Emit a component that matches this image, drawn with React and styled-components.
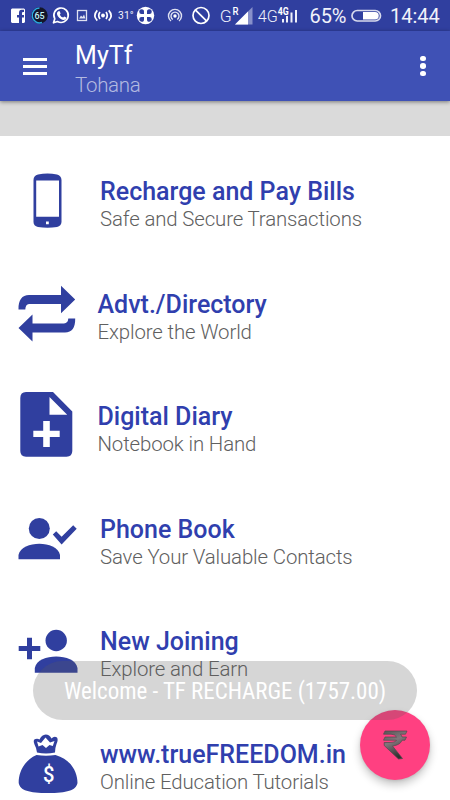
import React from "react";
import styled, { createGlobalStyle } from "styled-components";

const GlobalStyle = createGlobalStyle`
  * { box-sizing: border-box; }
  body { margin: 0; background: #fff; font-family: Roboto, "Liberation Sans", sans-serif; }
`;

const Screen = styled.div`
  position: relative;
  display: flex;
  flex-direction: column;
  width: 450px;
  height: 800px;
  overflow: hidden;
  background: #fff;
`;

const StatusBar = styled.header`
  display: flex;
  flex: none;
  align-items: flex-start;
  height: 31px;
  background: #303f9f;
  color: #f1f2fa;
`;

const StatusIcon = styled.svg`
  display: block;
  flex: none;
  width: ${(p) => p.$w}px;
  height: 31px;
  fill: none;
  stroke: none;
  font-family: Roboto, sans-serif;
`;

const StatusText = styled.span`
  flex: none;
  width: ${(p) => p.$w}px;
  font-size: ${(p) => p.$size || 20}px;
  line-height: ${(p) => p.$line || 32}px;
  letter-spacing: ${(p) => p.$track || 0}px;
  white-space: nowrap;
`;

const Toolbar = styled.div`
  position: relative;
  z-index: 1;
  display: flex;
  flex: none;
  align-items: center;
  height: 70px;
  padding: 0 23px;
  background: #3f51b5;
  box-shadow: 0 1px 4px rgba(0, 0, 0, 0.45);
`;

const MenuButton = styled.button`
  display: flex;
  flex-direction: column;
  gap: 4px;
  width: 24px;
  padding: 0;
  border: 0;
  background: none;
`;

const MenuLine = styled.span`
  height: 3px;
  background: #fff;
`;

const Heading = styled.div`
  flex: 1;
  margin-left: 28px;
  padding-top: 8px;
`;

const AppTitle = styled.h1`
  margin: 0;
  color: #fff;
  font-size: 25px;
  font-weight: 400;
  line-height: 30px;
  letter-spacing: 0.1px;
`;

const AppSubtitle = styled.div`
  color: #b3bae1;
  font-size: 20.5px;
  font-weight: 300;
  line-height: 29px;
  letter-spacing: -0.3px;
`;

const MoreButton = styled.button`
  display: flex;
  flex-direction: column;
  gap: 1.9px;
  margin-right: 1.5px;
  padding: 0;
  border: 0;
  background: none;
`;

const Dot = styled.span`
  width: 5.6px;
  height: 5.6px;
  border-radius: 50%;
  background: #fff;
`;

const Banner = styled.div`
  flex: none;
  height: 35px;
  background: #dadada;
`;

const List = styled.main`
  display: flex;
  flex-direction: column;
  flex: none;
  padding-top: 12px;
`;

const Row = styled.article`
  display: flex;
  align-items: center;
  height: 112.56px;
  padding-left: 16px;
`;

const RowIcon = styled.svg`
  flex: none;
  width: 64px;
  height: 80px;
  fill: #303f9f;
`;

const RowText = styled.div`
  margin-left: ${(p) => p.$gap}px;
  padding-bottom: 1.4px;
  white-space: nowrap;
`;

const RowTitle = styled.h2`
  margin: 0;
  color: #303fae;
  font-size: 25px;
  font-weight: 500;
  line-height: 31px;
`;

const RowSub = styled.div`
  color: #606060;
  font-size: 20.4px;
  font-weight: 300;
  line-height: 24px;
  letter-spacing: -0.13px;
`;

const Fab = styled.button`
  position: absolute;
  left: 360px;
  top: 710px;
  width: 70px;
  height: 70px;
  padding: 0;
  border: 0;
  border-radius: 50%;
  background: #ff4081;
  box-shadow: 0 5px 9px rgba(0, 0, 0, 0.22), 0 1px 3px rgba(0, 0, 0, 0.1);

  svg { display: block; }
`;

const Toast = styled.div`
  position: absolute;
  left: 33px;
  top: 661px;
  display: flex;
  align-items: center;
  justify-content: center;
  width: 384px;
  height: 59px;
  border-radius: 29.5px;
  background: rgba(90, 90, 90, 0.25);
`;

const ToastText = styled.span`
  padding-top: 2px;
  color: #fff;
  font-family: "Roboto Condensed", Roboto, sans-serif;
  font-stretch: 75%;
  font-size: 23px;
  line-height: 30px;
  letter-spacing: -0.04px;
  white-space: nowrap;
`;

const rows = [
  {
    title: "Recharge and Pay Bills", sub: "Safe and Secure Transactions", gap: 20, y: 164,
    icon: (
      <path fillRule="evenodd" d="M38 174.5Q47.5 172.5 57 174.5Q61.3 175.5 61.5 180V222Q61.3 226 57 227Q47.5 228.500 38 227Q33.500 226 33.500 222V180Q33.500 175.500 38 174.500ZM36.200 180.500V216.700H59V180.500ZM46 221.500V224.300H48.800V221.500Z" />
    ),
  },
  {
    title: "Advt./Directory", sub: "Explore the World", gap: 17.5, y: 276.9,
    icon: (
      <>
        <path d="M18.500 309.300C18.300 300 22 295 29 295H61V285.700L75.200 299.500L61 313.200V304H29Q25.500 304.500 25.300 309.300Z" />
        <path d="M75.200 318.500C75.400 327.500 72 332.500 65 332.500H32.500V341.500L18.500 328L32.500 314.300V323.500H64Q68 323 68.300 318.500Z" />
      </>
    ),
  },
  {
    title: "Digital Diary", sub: "Notebook in Hand", gap: 17.5, y: 389,
    icon: (
      <path fillRule="evenodd" d="M26 392H53L72.300 411.500V451Q72.300 456.700 66.500 456.700H26Q20.300 456.700 20.300 451V398Q20.300 392 26 392ZM49.500 397V414.700H67.200ZM43.200 421V430.700H33.300V437H43.200V447H49.800V437H59.700V430.700H49.800V421Z" />
    ),
  },
  {
    title: "Phone Book", sub: "Save Your Valuable Contacts", gap: 20, y: 502,
    icon: (
      <>
        <circle cx="39.300" cy="528.500" r="10.500" />
        <path d="M18.500 559.300V555C20 547 30 543.700 39.300 543.700S58.500 547 60 555V559.300Z" />
        <path d="M52.800 534.500L56.200 531.300L61.600 536.800L73.200 525.300L76.700 528.700L61.600 544.500Z" />
      </>
    ),
  },
  {
    title: "New Joining", sub: "Explore and Earn", gap: 20, y: 614,
    icon: (
      <>
        <path d="M27 637.700H32V646H40.300V651H32V659.300H27V651H18.700V646H27Z" />
        <circle cx="56.200" cy="640.500" r="10.700" />
        <path d="M34.800 672.700V668C36.300 660 46.500 656.500 56.200 656.500S76 660 77.500 668V672.700Z" />
      </>
    ),
  },
  {
    title: "www.trueFREEDOM.in", sub: "Online Education Tutorials", gap: 20, y: 727.1,
    icon: (
      <>
        <path d="M36.500 755C23 761 18.500 774 18.700 783C20 790.500 29 793 48 793S76 790.500 77.500 783C77.500 773 72 760 55.500 755Q46 756.500 36.500 755Z" />
        <path d="M37 752.500Q36.500 748 34.500 744.500Q32.500 739.500 35.500 739Q38 738.500 39.500 739.500Q42 735 45.700 734.700Q49.500 735 51.500 738.500Q54 736 57 737.500Q58.500 739.500 56.500 744Q55 748 55 752.500Q46 754.500 37 752.500Z" />
        <path fill="#fff" d="M38.500 746.500L37 741.500L41 743L45.500 737.500L50 742.500L54.500 741L52.800 746L49.500 745L46 748L42.500 745Z" />
        <text x="43" y="782" fill="#fff" fontFamily="Roboto" fontSize="21.500" fontWeight="500" textLength="11.500" lengthAdjust="spacingAndGlyphs">$</text>
      </>
    ),
  },
];

function StatusIcons() {
  return (
    <>
      <StatusIcon $w={28} viewBox="0 0 28 31">
        <path fill="#fff" fillRule="evenodd" d="M12 8.500H24L25 9.500V22L24 23H22V17.500H24V15H22V13Q22 12 23 12H24V9.800H21.500Q19 10 19 12.800V15H17V17.500H19V23H12L11 22V9.500Z" />
      </StatusIcon>
      <StatusIcon $w={23} viewBox="28 0 23 31">
        <circle cx="39.500" cy="15.500" r="7.500" fill="#15152a" stroke="#141829" strokeWidth="1.500" />
        <path d="M42 22.500A7.400 7.400 0 1 1 39.500 8.100" stroke="#2ca6df" strokeWidth="1.500" />
        <text x="39.500" y="19" fill="#c3f6fa" fontSize="9" fontWeight="500" textAnchor="middle">65</text>
      </StatusIcon>
      <StatusIcon $w={21} viewBox="51 0 21 31">
        <path d="M53.500 22.800L54.800 18.800A7.200 7.200 0 1 1 57.500 21.500Z" stroke="#fff" strokeWidth="1.700" strokeLinejoin="round" />
        <path fill="#fff" d="M58 11.500Q59.500 10.500 60 12L60.600 13.500L59.800 14.700Q61 17 63.200 17.600L64.300 16.500L66.200 17.500Q66.200 20 63.500 20C60 19.500 56.500 15.500 57 13Q57.200 12 58 11.500Z" />
      </StatusIcon>
      <StatusIcon $w={18} viewBox="72 0 18 31">
        <rect x="77.500" y="10.500" width="9" height="10" stroke="#dfe1f1" strokeWidth="1.300" />
        <path fill="#dfe1f1" d="M79 18.500L81 15.500L82.500 17L84 14.500L85.500 18.500Z" />
      </StatusIcon>
      <StatusIcon $w={28} viewBox="90 0 28 31">
        <circle cx="103" cy="15.500" r="1.900" fill="#fff" />
        <path d="M100 12Q97.500 15.500 100 19M106 12Q108.500 15.500 106 19M97.300 10.300Q92.500 15.500 97.300 20.700M108.700 10.300Q113.500 15.500 108.700 20.700" stroke="#fff" strokeWidth="1.700" />
      </StatusIcon>
      <StatusText $w={17} $size={10.300} $line={32} $track={0.1}>31°</StatusText>
      <StatusIcon $w={25} viewBox="135 0 25 31">
        <circle cx="145.500" cy="15.500" r="8.700" fill="#fff" />
        <path d="M144 11.800A2.400 2.400 0 1 0 141.800 14H144ZM147 11.800A2.400 2.400 0 1 1 149.200 14H147ZM144 19.200A2.400 2.400 0 1 1 141.800 17H144ZM147 19.200A2.400 2.400 0 1 0 149.200 17H147Z" fill="#303f9f" />
      </StatusIcon>
      <StatusIcon $w={28} viewBox="160 0 28 31">
        <circle cx="175" cy="16" r="1.700" fill="#fff" />
        <path d="M172.800 19.500A4 4 0 1 1 177.200 19.500M171 21A6.500 6.500 0 1 1 179 21" stroke="#dfe1f1" strokeWidth="1.400" />
      </StatusIcon>
      <StatusIcon $w={32} viewBox="188 0 32 31">
        <circle cx="201" cy="15.500" r="8" stroke="#fff" strokeWidth="1.700" />
        <path d="M195.300 9.800L206.700 21.200" stroke="#fff" strokeWidth="1.700" />
      </StatusIcon>
      <StatusIcon $w={38} viewBox="220 0 38 31">
        <text x="219.800" y="22.300" fill="#eef0fa" fontSize="16" fontWeight="300" textLength="12" lengthAdjust="spacingAndGlyphs">G</text>
        <path d="M235 24.500L252.500 7V24.500Z" fill="#8790ca" />
        <path d="M235 24.500L248 11.500V24.500Z" fill="#fff" />
        <text x="232.500" y="15" fill="#fff" stroke="#303f9f" strokeWidth="1" paintOrder="stroke" fontSize="10.500" fontWeight="500" textLength="6" lengthAdjust="spacingAndGlyphs">R</text>
      </StatusIcon>
      <StatusIcon $w={51.5} viewBox="258 0 51.500 31">
        <text x="257.800" y="22.300" fill="#eef0fa" fontSize="16" fontWeight="300" textLength="20" lengthAdjust="spacingAndGlyphs">4G</text>
        <path d="M283 19V22.500M287 16V22.500M291.500 12.500V22.500M296 10V22.500" stroke="#eef0fa" strokeWidth="2" />
        <text x="277.800" y="15" fill="#fff" stroke="#303f9f" strokeWidth="1" paintOrder="stroke" fontSize="10" fontWeight="700" textLength="11" lengthAdjust="spacingAndGlyphs">4G</text>
      </StatusIcon>
      <StatusText $w={41.5} $size={20} $line={33} $track={-0.1}>65%</StatusText>
      <StatusIcon $w={39} viewBox="351 0 39 31">
        <rect x="352" y="10.500" width="28.500" height="10.500" rx="5.250" stroke="#d7daed" strokeWidth="1.700" />
        <path d="M363 12H375A3.700 3.700 0 0 1 375 19.500H363Z" fill="#fff" />
      </StatusIcon>
      <StatusText $w={55} $size={20} $line={33}>14:44</StatusText>
    </>
  );
}

export default function App() {
  return (
    <>
      <GlobalStyle />
      <Screen>
        <StatusBar><StatusIcons /></StatusBar>
        <Toolbar>
          <MenuButton aria-label="Menu"><MenuLine /><MenuLine /><MenuLine /></MenuButton>
          <Heading>
            <AppTitle>MyTf</AppTitle>
            <AppSubtitle>Tohana</AppSubtitle>
          </Heading>
          <MoreButton aria-label="More options"><Dot /><Dot /><Dot /></MoreButton>
        </Toolbar>
        <Banner />
        <List>
          {rows.map((r) => (
            <Row key={r.title}>
              <RowIcon viewBox={`16 ${r.y} 64 80`}>{r.icon}</RowIcon>
              <RowText $gap={r.gap}>
                <RowTitle>{r.title}</RowTitle>
                <RowSub>{r.sub}</RowSub>
              </RowText>
            </Row>
          ))}
        </List>
        <Fab aria-label="Recharge">
          <svg width="70" height="70" viewBox="360 710 70 70">
            <defs>
              <linearGradient id="rupee" x1="0" y1="0" x2="0.4" y2="1">
                <stop offset="0" stopColor="#555" />
                <stop offset="0.45" stopColor="#82777c" />
                <stop offset="1" stopColor="#303030" />
              </linearGradient>
            </defs>
            <path fill="url(#rupee)" stroke="#50494c" strokeWidth=".7" d="M385 731H407L405.500 734.200H400.500Q401.700 735.500 402 737H406.500L405 740.200H402Q400.500 745 392.500 746L402.500 758.500L398.500 759L384.200 745.500V742.500H389Q395.500 742.500 396.500 740.200H383.500L385 737H396.500Q395 734.200 391 734.200H383.500Z" />
          </svg>
        </Fab>
        <Toast><ToastText>Welcome - TF RECHARGE (1757.00)</ToastText></Toast>
      </Screen>
    </>
  );
}
